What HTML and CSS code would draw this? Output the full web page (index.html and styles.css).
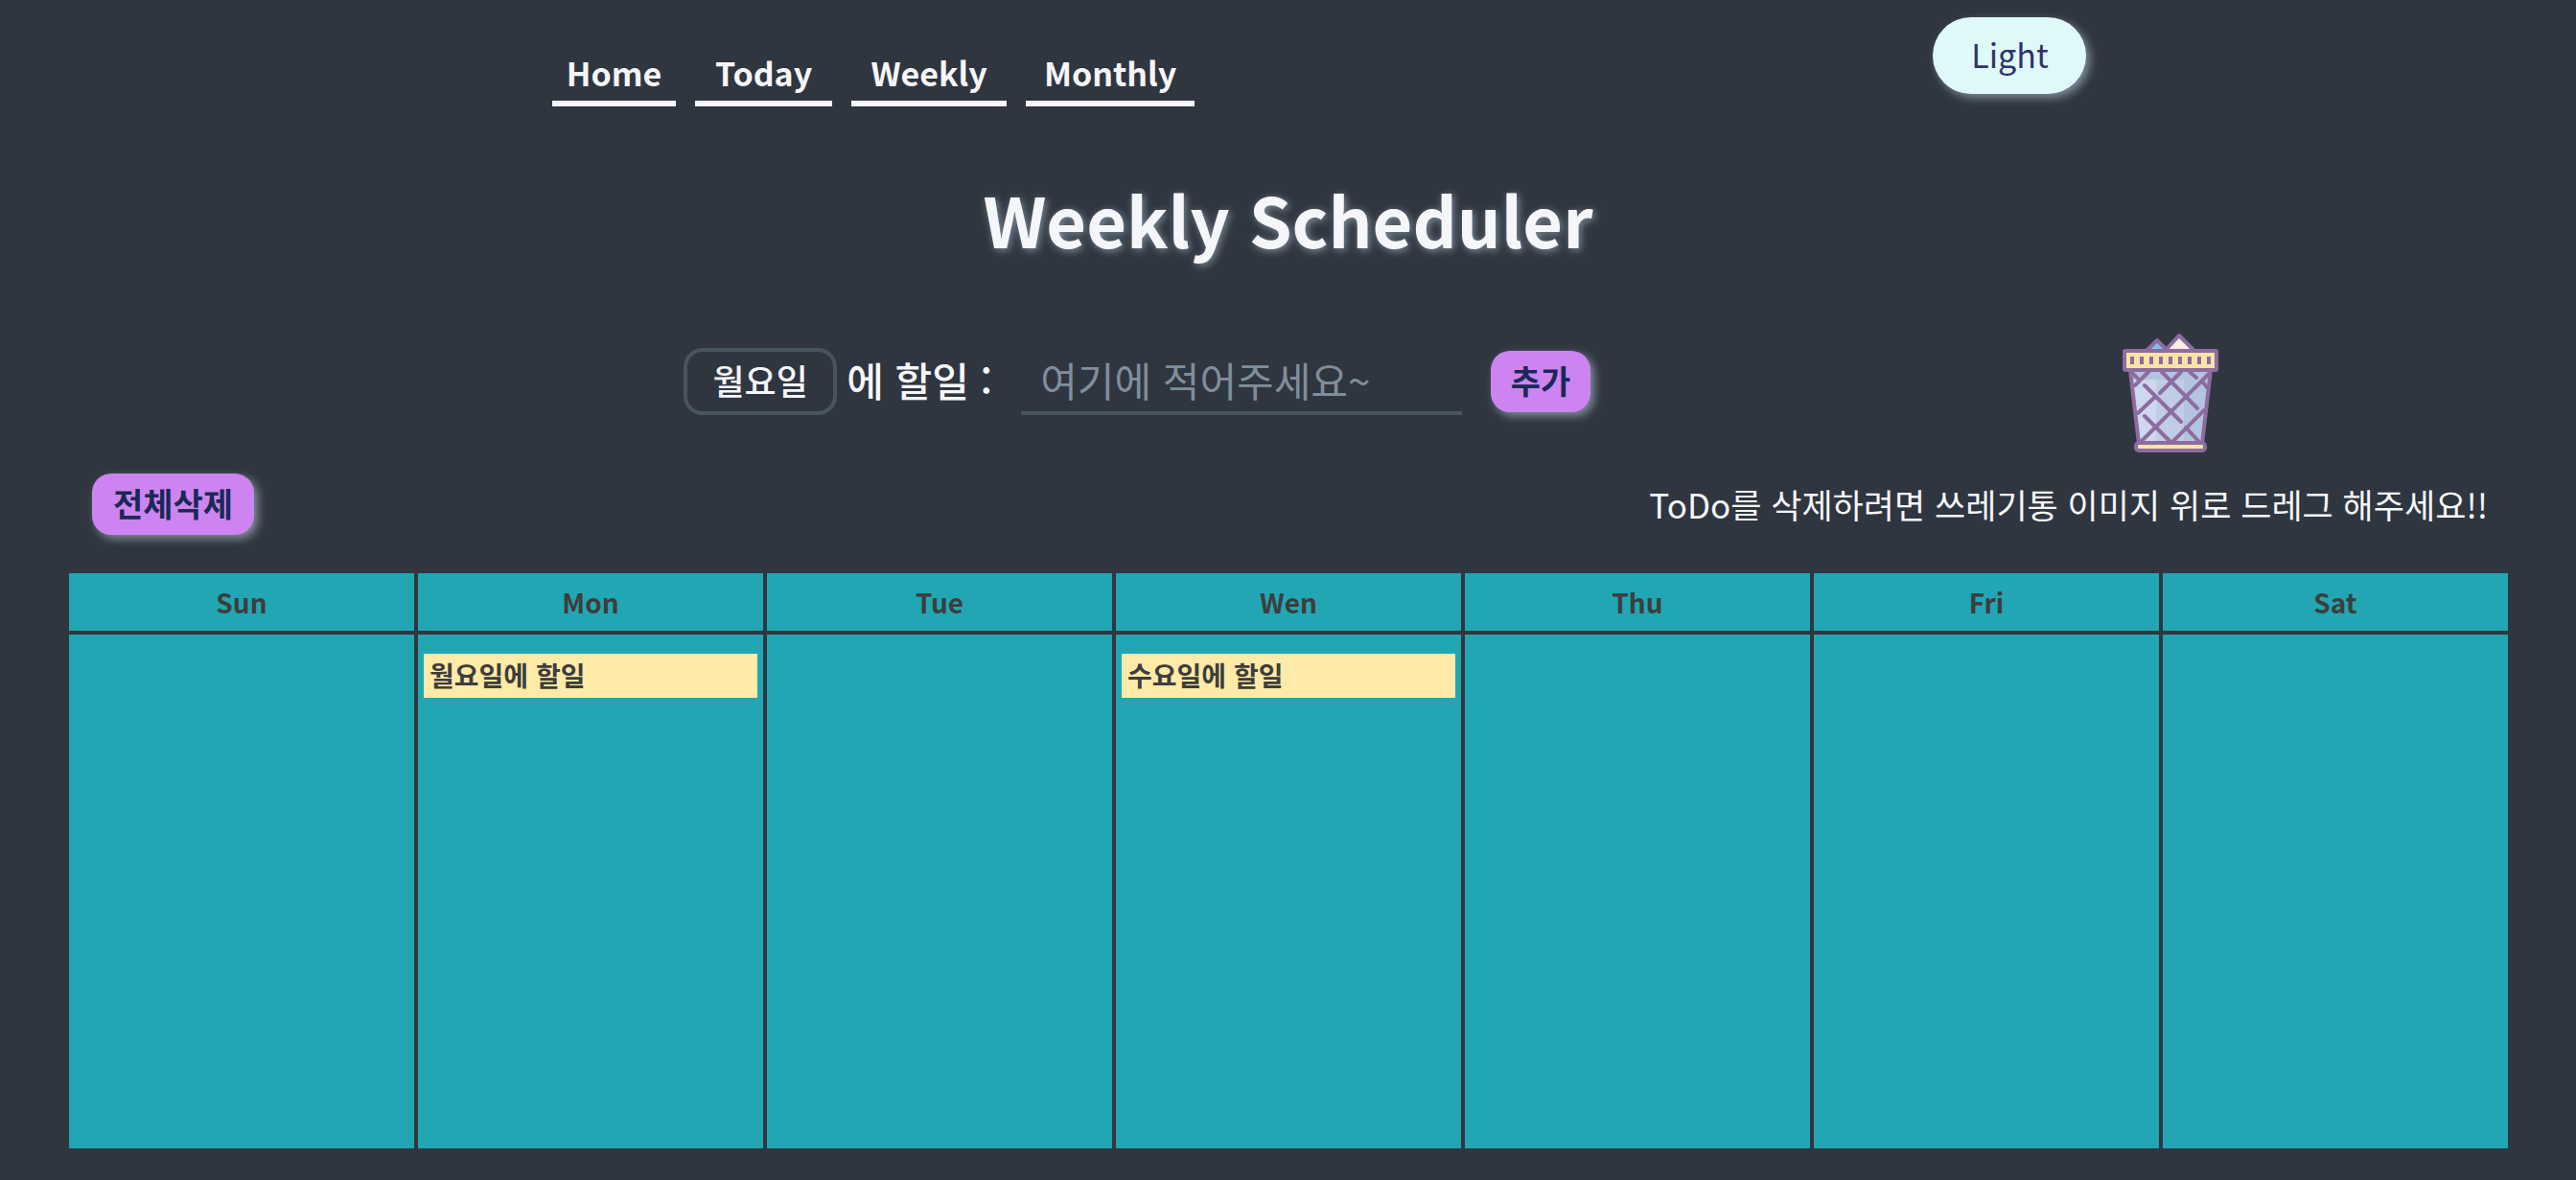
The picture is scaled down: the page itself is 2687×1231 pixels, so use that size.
FILE: index.html
```html
<!DOCTYPE html>
<html lang="ko">
<head>
  <meta charset="utf-8">
  <meta name="viewport" content="width=device-width, initial-scale=1">
  <title>Weekly Scheduler</title>
  <link rel="stylesheet" href="styles.css">
</head>
<body>
  <header class="header">
    <nav class="nav">
      <a class="nav-link" href="#home">Home</a>
      <a class="nav-link" href="#today">Today</a>
      <a class="nav-link" href="#weekly">Weekly</a>
      <a class="nav-link" href="#monthly">Monthly</a>
    </nav>
    <button class="theme-button" type="button">Light</button>
  </header>
  <main>
    <h1 class="title">Weekly Scheduler</h1>
    <section class="entry">
      <form class="form">
        <select class="day-select" id="day" aria-label="요일">
          <option>일요일</option>
          <option selected>월요일</option>
          <option>화요일</option>
          <option>수요일</option>
          <option>목요일</option>
          <option>금요일</option>
          <option>토요일</option>
        </select>
        <label class="form-label" for="todo">에 할일 :</label>
        <input class="todo-input" id="todo" type="text" placeholder="여기에 적어주세요~">
        <button class="button" type="button">추가</button>
      </form>
      <svg class="trash" viewBox="0 0 128 128" role="img" aria-label="쓰레기통">
        <g stroke="#8d6ca0" stroke-width="4" stroke-linejoin="round" stroke-linecap="round">
          <path d="M39 20 50 9 61 20Z" fill="#78c4f0"/>
          <path d="M58 20 73 4 89 20Z" fill="#faeee0"/>
          <path d="M22 40H106L98 118H31Z" fill="#c1cce7" stroke="none"/>
          <path d="M24 50H49V116H33Z" fill="#ced7ed" stroke="none"/>
          <path d="M24 42H106L98 116H78V50H24Z" fill="#b2c4df" stroke="none"/>
          <path d="M22 40 31 117M106 40 97 117" fill="none"/>
          <path d="M55 42 92 80M84 42 91 48M37 56 75 94M37 88 64 115M80 100 94 115M23 42 30 49M27 56 41 42M53 64 75 42M30 85 48 68M33 115 105 43M66 115 99 82M97 52 103 59" fill="none"/>
          <rect x="16" y="20" width="96" height="20" rx="1" fill="#fae3a7"/>
          <rect x="28" y="116" width="72" height="8" rx="3" fill="#fae3a7"/>
        </g>
        <path d="M24 26v8M34 26v8M44 26v8M54 26v8M64 26v8M74 26v8M84 26v8M94 26v8M104 26v8" stroke="#8d6ca0" stroke-width="4"/>
      </svg>
    </section>
    <section class="tools">
      <button class="button button-wide" type="button">전체삭제</button>
      <p class="notice">ToDo를 삭제하려면 쓰레기통 이미지 위로 드레그 해주세요!!</p>
    </section>
    <div class="calendar-wrap">
      <table class="calendar">
        <thead>
          <tr><th>Sun</th><th>Mon</th><th>Tue</th><th>Wen</th><th>Thu</th><th>Fri</th><th>Sat</th></tr>
        </thead>
        <tbody>
          <tr>
            <td></td>
            <td><div class="todo" draggable="true">월요일에 할일</div></td>
            <td></td>
            <td><div class="todo" draggable="true">수요일에 할일</div></td>
            <td></td>
            <td></td>
            <td></td>
          </tr>
        </tbody>
      </table>
    </div>
  </main>
</body>
</html>
```
FILE: styles.css
```css
* {
  box-sizing: border-box;
}

body {
  margin: 0;
  min-height: 100vh;
  background: #2f3640;
  color: #f5f6fa;
  font-family: "Noto Sans CJK KR", sans-serif;
}

button,
input,
select {
  font-family: inherit;
}

.header {
  display: flex;
  justify-content: space-between;
  align-items: flex-start;
  padding: 18px 19% 0 21.44%;
}

.nav {
  display: grid;
  grid-template-columns: 129px 143px 162px 176px;
  gap: 20px;
  padding-top: 32px;
}

.nav-link {
  padding-bottom: 4px;
  border-bottom: 6px solid #f5f6fa;
  color: #f5f6fa;
  font-size: 34px;
  font-weight: 700;
  line-height: 51px;
  text-align: center;
  text-decoration: none;
}

.theme-button {
  width: 160px;
  height: 80px;
  padding: 0 0 4px;
  border: 0;
  border-radius: 40px;
  background: #dff9fb;
  box-shadow: 4px 4px 10px #808e9b;
  color: #30336b;
  font-size: 34px;
}

.title {
  margin: 57px 0 58px;
  font-size: 72px;
  font-weight: 700;
  line-height: 120px;
  text-align: center;
  text-shadow: 2px 2px 8px #808e9b;
}

.entry {
  display: flex;
  justify-content: space-between;
  align-items: center;
  padding: 0 13.36% 0 26.54%;
}

.form {
  display: flex;
  align-items: center;
  padding-bottom: 24px;
}

.day-select {
  width: 160px;
  height: 70px;
  padding: 0 0 4px;
  border: 4px solid #485460;
  border-radius: 20px;
  appearance: none;
  background: transparent;
  color: #f5f6fa;
  font-size: 36px;
  font-weight: 500;
  text-align: center;
  text-align-last: center;
}

.form-label {
  width: 192px;
  padding: 0 0 4px 10px;
  font-size: 42px;
  font-weight: 500;
  line-height: 60px;
  white-space: nowrap;
}

.todo-input {
  width: 460px;
  height: 70px;
  padding: 0 20px 2px;
  border: 0;
  border-bottom: 4px solid #485460;
  background: transparent;
  color: #f5f6fa;
  font-size: 42px;
}

.todo-input::placeholder {
  color: #808e9b;
  opacity: 1;
}

.button {
  width: 104px;
  height: 64px;
  padding: 0 0 4px;
  border: 0;
  border-radius: 20px;
  background: #cd84f1;
  box-shadow: 4px 4px 10px #808e9b;
  color: #192a56;
  font-size: 34px;
  font-weight: 700;
}

.form .button {
  margin-left: 30px;
}

.button-wide {
  width: 169px;
}

.trash {
  width: 128px;
  height: 128px;
}

.tools {
  display: flex;
  justify-content: space-between;
  align-items: center;
  padding: 20px 92px 36px 96px;
}

.notice {
  margin: 0;
  font-size: 35px;
  line-height: 64px;
}

.calendar-wrap {
  padding: 0 67px 0 68px;
}

.calendar {
  width: 100%;
  table-layout: fixed;
  border-spacing: 4px;
  color: #3d3d3d;
}

.calendar th,
.calendar td {
  padding: 0;
  background: #22a6b3;
}

.calendar th {
  height: 60px;
  font-size: 28px;
  font-weight: 700;
  line-height: 40px;
}

.calendar td {
  height: 536px;
  padding: 20px 6px;
  vertical-align: top;
}

.todo {
  padding: 0 6px 2px;
  background: #ffeaa7;
  font-size: 28px;
  font-weight: 700;
  line-height: 44px;
}
```
